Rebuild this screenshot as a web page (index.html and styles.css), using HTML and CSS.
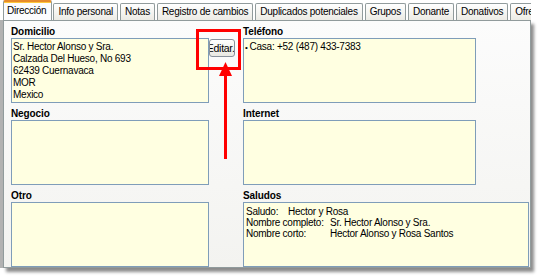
FILE: index.html
```html
<!DOCTYPE html>
<html lang="es">
<head>
<meta charset="utf-8">
<title>Dirección</title>
<link rel="stylesheet" href="styles.css">
</head>
<body>
<div class="window">
  <div class="tabs">
    <div class="tab active">Dirección</div>
    <div class="tab">Info personal</div>
    <div class="tab">Notas</div>
    <div class="tab">Registro de cambios</div>
    <div class="tab">Duplicados potenciales</div>
    <div class="tab">Grupos</div>
    <div class="tab">Donante</div>
    <div class="tab">Donativos</div>
    <div class="tab">Ofrendas</div>
  </div>
  <div class="page">
    <div class="row">
      <section class="group narrow">
        <div class="label">Domicilio</div>
        <div class="box">
          <div class="line">Sr. Hector Alonso y Sra.</div>
          <div class="line">Calzada Del Hueso, No 693</div>
          <div class="line">62439 Cuernavaca</div>
          <div class="line">MOR</div>
          <div class="line">Mexico</div>
        </div>
      </section>
      <div class="btn-col"><button class="edit" type="button"><span>Editar..</span></button></div>
      <section class="group wide">
        <div class="label">Teléfono</div>
        <div class="box">
          <div class="line"><span class="bullet">•</span>Casa: +52 (487) 433-7383</div>
        </div>
      </section>
    </div>
    <div class="row">
      <section class="group narrow">
        <div class="label">Negocio</div>
        <div class="box"></div>
      </section>
      <div class="btn-col"></div>
      <section class="group wide">
        <div class="label">Internet</div>
        <div class="box"></div>
      </section>
    </div>
    <div class="row">
      <section class="group narrow">
        <div class="label">Otro</div>
        <div class="box"></div>
      </section>
      <div class="btn-col"></div>
      <section class="group widest">
        <div class="label">Saludos</div>
        <div class="box small">
          <div class="sline"><span class="k1">Saludo:</span><span>Hector y Rosa</span></div>
          <div class="sline"><span class="k2">Nombre completo:</span><span>Sr. Hector Alonso y Sra.</span></div>
          <div class="sline"><span class="k2">Nombre corto:</span><span>Hector Alonso y Rosa Santos</span></div>
        </div>
      </section>
    </div>
  </div>
  <div class="callout"></div>
  <svg class="arrow" width="540" height="276" viewBox="0 0 540 276" aria-hidden="true">
    <polygon points="225.5,62 219,76 232,76" fill="#f00"/>
    <rect x="224" y="75" width="3" height="84" fill="#f00"/>
  </svg>
</div>
</body>
</html>
```

FILE: styles.css
```css
* { box-sizing: border-box; }

html, body {
  margin: 0;
  padding: 0;
  background: #ffffff;
}

body {
  font-family: "Liberation Sans", Arial, sans-serif;
  font-size: 10px;
  color: #000;
  width: 540px;
  height: 276px;
  overflow: hidden;
}

.window {
  position: relative;
  width: 540px;
  height: 276px;
  padding-left: 3px;
}

.tabs {
  display: flex;
  align-items: flex-end;
  gap: 2px;
  height: 20px;
  width: 528px;
  overflow: hidden;
  position: relative;
  z-index: 2;
}

.tab {
  flex: none;
  height: 17px;
  padding: 0 4px;
  border: 1px solid #919b9c;
  border-bottom: none;
  border-radius: 2px 2px 0 0;
  background: linear-gradient(#ffffff, #ecebe5);
  line-height: 15px;
  letter-spacing: -0.25px;
  white-space: nowrap;
}

.tab.active {
  height: 21px;
  margin-bottom: -1px;
  margin-right: -1px;
  padding: 0 5px 0 3px;
  background: #fcfcfe;
  border-top: 2px solid #e68b2c;
  box-shadow: inset 0 1px 0 #ffc73c;
  line-height: 17px;
}

.page {
  width: 528px;
  height: 248px;
  border: 1px solid #919b9c;
  background: linear-gradient(#fcfcfc, #f3f3f0);
  padding: 4px 0 0 7px;
  display: flex;
  flex-direction: column;
  gap: 4px;
  box-shadow: 3px 4px 3px rgba(0, 0, 0, 0.45), -3px 0 0 #b2b2b2;
}

.row {
  display: flex;
  align-items: flex-start;
}

.group.narrow { width: 198px; }
.group.wide { width: 233px; }
.group.widest { width: 286px; }

.btn-col {
  width: 34px;
  flex: none;
  padding-top: 14px;
}

.label {
  height: 13px;
  padding-top: 1px;
  line-height: 12px;
  font-weight: bold;
  letter-spacing: -0.1px;
}

.box {
  height: 65px;
  border: 1px solid #7f9db9;
  background: #ffffe1;
  padding: 2px 1px 0 1px;
  overflow: hidden;
}

.line {
  line-height: 12px;
  letter-spacing: -0.25px;
  white-space: nowrap;
}

.bullet {
  font-size: 8px;
  margin-right: 2px;
}

.box.small {
  padding: 3px 2px 0 2px;
}

.sline {
  display: flex;
  line-height: 11px;
  letter-spacing: -0.25px;
  white-space: nowrap;
}

.k1 { width: 42px; flex: none; }
.k2 { width: 84px; flex: none; }

.edit {
  width: 26px;
  height: 18px;
  margin: 0;
  padding: 0;
  border: 1px solid #8a929c;
  border-radius: 3px;
  background: linear-gradient(#ffffff, #e9e8e2);
  font-family: "Liberation Sans", Arial, sans-serif;
  font-size: 10.5px;
  letter-spacing: -0.3px;
  color: #000;
  display: flex;
  justify-content: center;
  align-items: center;
  overflow: hidden;
  white-space: nowrap;
}

.callout {
  position: absolute;
  left: 196px;
  top: 29px;
  width: 45px;
  height: 41px;
  border: 3px solid #f00;
  z-index: 3;
}

.arrow {
  position: absolute;
  left: 0;
  top: 0;
  z-index: 3;
  pointer-events: none;
}
```
